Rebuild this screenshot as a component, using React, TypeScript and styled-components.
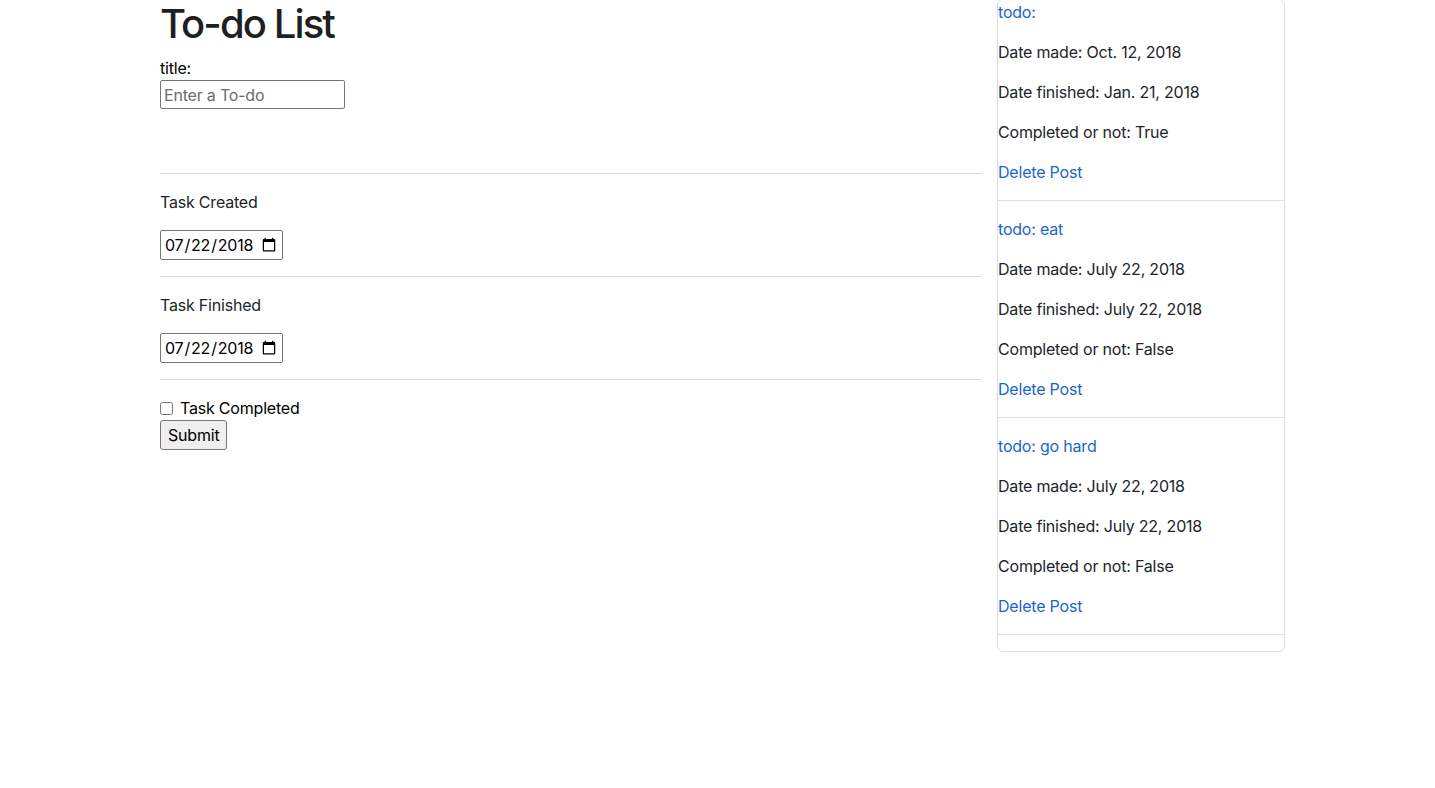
import React from "react";
import styled, { createGlobalStyle } from "styled-components";

const GlobalStyle = createGlobalStyle`
  html, body { margin: 0; padding: 0; background: #fff; }
  body {
    font-family: Inter, "Liberation Sans", sans-serif;
    font-size: 16px;
    line-height: 1.5;
    letter-spacing: -0.2px;
    color: #212529;
  }
  * { box-sizing: border-box; }
`;

const Page = styled.div`
  display: flex;
  align-items: flex-start;
  gap: 15px;
  padding-left: 160px;
`;

const FormColumn = styled.form`
  width: 822px;
  display: flex;
  flex-direction: column;
  align-items: flex-start;
`;

const Title = styled.h1`
  margin: 0 0 8px;
  font-size: 40px;
  font-weight: 500;
  line-height: 48px;
  letter-spacing: -1.9px;
  color: #1d1f21;
`;

const Label = styled.label`
  display: block;
  line-height: 24px;
  color: #000;
`;

const TextInput = styled.input`
  width: 185px;
  height: 29px;
  font: 16px Inter, "Liberation Sans", sans-serif;
  letter-spacing: -0.2px;
  color: #212529;
  padding: 1px 3px;
  border: 1px solid #767676;
  border-radius: 2px;
  margin-bottom: 64px;
  &::placeholder { color: #6b6b6b; }
`;

const Rule = styled.hr`
  align-self: stretch;
  margin: 0 0 16px;
  border: 0;
  border-top: 1px solid #dcdddd;
`;

const FieldLabel = styled.p`
  margin: 0 0 16px;
  line-height: 24px;
`;

const DateInput = styled.input`
  width: 123px;
  height: 30px;
  font: 16px Inter, "Liberation Sans", sans-serif;
  letter-spacing: -0.2px;
  color: #000;
  padding: 1px 3px;
  border: 1px solid #767676;
  border-radius: 2px;
  margin-bottom: 16px;
`;

const CheckRow = styled.label`
  display: flex;
  align-items: center;
  line-height: 24px;
  color: #000;
`;

const CheckBox = styled.input`
  width: 13px;
  height: 13px;
  margin: 0 7px 0 0;
`;

const SubmitButton = styled.button`
  font: 16px Inter, "Liberation Sans", sans-serif;
  letter-spacing: -0.2px;
  color: #000;
  height: 30px;
  padding: 1px 7px;
  background: #efefef;
  border: 1px solid #767676;
  border-radius: 3px;
`;

const Card = styled.ul`
  width: 288px;
  margin: -1px 0 0;
  padding: 0;
  list-style: none;
  border: 1px solid #dfdfdf;
  border-radius: 6px;
`;

const Item = styled.li`
  padding: 0;
  border-bottom: 1px solid #dfdfdf;
  & + & { padding-top: 16px; }
  &:last-child { border-bottom: 0; }
`;

const Line = styled.p`
  margin: 0 0 16px;
  line-height: 24px;
`;

const Link = styled.a`
  color: #1a66cc;
  text-decoration: none;
`;

const todos = [
  { title: "", made: "Oct. 12, 2018", finished: "Jan. 21, 2018", done: "True" },
  { title: "eat", made: "July 22, 2018", finished: "July 22, 2018", done: "False" },
  { title: "go hard", made: "July 22, 2018", finished: "July 22, 2018", done: "False" },
];

export default function App() {
  return (
    <>
      <GlobalStyle />
      <Page>
        <FormColumn onSubmit={(e) => e.preventDefault()}>
          <Title>To-do List</Title>
          <Label htmlFor="title">title:</Label>
          <TextInput id="title" type="text" placeholder="Enter a To-do" />
          <Rule />
          <FieldLabel>Task Created</FieldLabel>
          <DateInput type="date" defaultValue="2018-07-22" />
          <Rule />
          <FieldLabel>Task Finished</FieldLabel>
          <DateInput type="date" defaultValue="2018-07-22" />
          <Rule />
          <CheckRow>
            <CheckBox type="checkbox" />
            Task Completed
          </CheckRow>
          <SubmitButton type="submit">Submit</SubmitButton>
        </FormColumn>
        <Card>
          {todos.map((t, i) => (
            <Item key={i}>
              <Line>
                <Link href="#">todo: {t.title}</Link>
              </Line>
              <Line>Date made: {t.made}</Line>
              <Line>Date finished: {t.finished}</Line>
              <Line>Completed or not: {t.done}</Line>
              <Line>
                <Link href="#">Delete Post</Link>
              </Line>
            </Item>
          ))}
          <Item />
        </Card>
      </Page>
    </>
  );
}
